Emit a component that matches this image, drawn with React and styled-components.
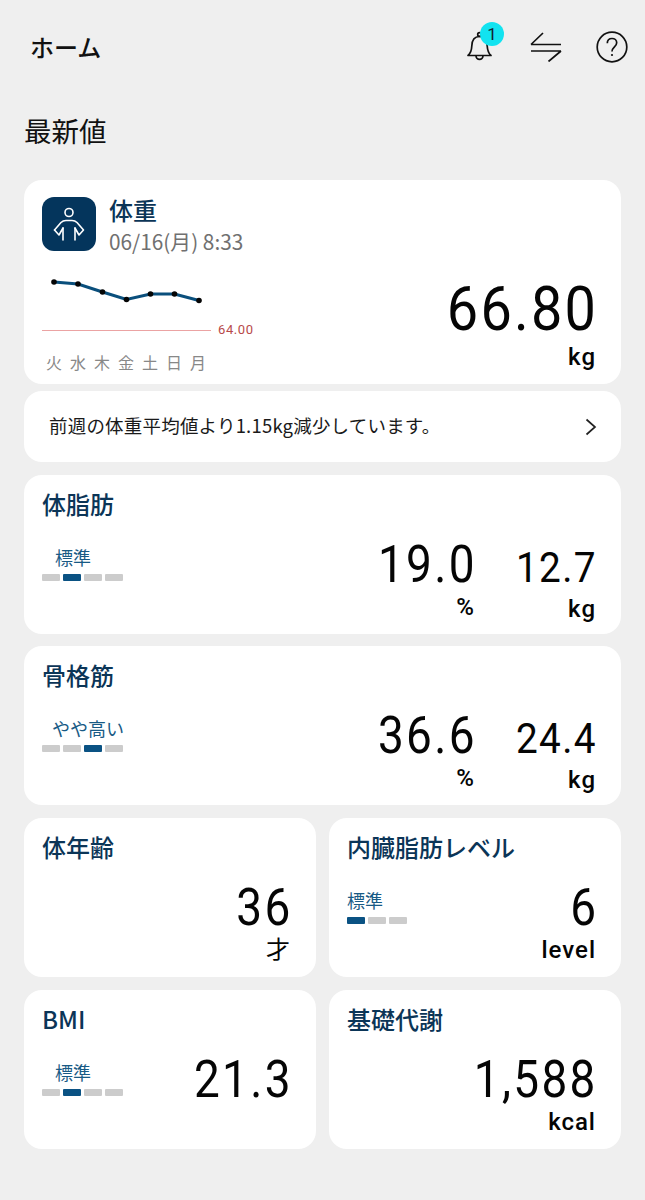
import React from "react";
import styled, { createGlobalStyle } from "styled-components";

const GlobalStyle = createGlobalStyle`
  html, body {
    margin: 0;
    padding: 0;
    background: #efefef;
  }
  body {
    font-family: "Noto Sans CJK JP", "Noto Sans", sans-serif;
  }
`;

const BellIcon = () => (
  <svg width="28" height="34" viewBox="0 0 28 34" fill="none" stroke="#111" strokeWidth="1.7" strokeLinejoin="round">
    <path d="M2 25.5h23c-2.5-2-3.5-5-3.800-9.500-.3-6-2.500-9.500-7.700-9.500S6 10 5.800 16c-.2 4.500-1.300 7.500-3.800 9.500z" />
    <path d="M10 25.800a3.500 3.500 0 0 0 7 0" />
    <circle cx="13.500" cy="4.500" r="1.800" />
  </svg>
);

const SwitchIcon = () => (
  <svg width="32" height="30" viewBox="0 0 32 30" fill="none" stroke="#111" strokeWidth="1.7">
    <path d="M1 12.500h30M1 12.500L13 1" />
    <path d="M1 19h30M31 19L18.500 29.500" />
  </svg>
);

const HelpIcon = () => (
  <svg width="32" height="32" viewBox="0 0 32 32" fill="none" stroke="#111" strokeWidth="1.7">
    <circle cx="16" cy="16" r="14.800" />
    <path d="M11.300 12.300c0-2.900 2-4.800 4.700-4.800s4.700 1.800 4.700 4.300c0 3.900-4.700 4.300-4.700 8.700" />
    <circle cx="16" cy="24" r="1.100" fill="#111" stroke="none" />
  </svg>
);

const BodyIcon = () => (
  <svg width="54" height="54" viewBox="0 0 54 54" fill="none" stroke="#fff" strokeWidth="1.6" strokeLinecap="round" strokeLinejoin="round">
    <circle cx="27" cy="15.500" r="4" />
    <path d="M12.500 33L19 25.500Q21 23.500 24 23.500h6Q33 23.500 35 25.500L41.500 33L37 38L33 31" />
    <path d="M12.500 33L17 38L21 31" />
    <path d="M21 31v12M33 31v12" />
  </svg>
);

const points = [
  [54, 282],
  [78, 284],
  [102.5, 292],
  [126.5, 299.5],
  [150.5, 294],
  [174.5, 294],
  [199, 300.5],
];

const TrendChart = () => (
  <svg width="230" height="50" viewBox="42 272 230 50" style={{ display: "block" }}>
    <polyline
      points={points.map((p) => p.join(",")).join(" ")}
      fill="none"
      stroke="#0a4f7c"
      strokeWidth="3"
    />
    {points.map((p, i) => (
      <circle key={i} cx={p[0]} cy={p[1]} r="2.8" fill="#050505" />
    ))}
  </svg>
);

const Level = ({ label, active, count = 4, indent = 0 }) => (
  <LevelBox>
    <LevelLabel $indent={indent}>{label}</LevelLabel>
    <LevelBars>
      {Array.from({ length: count }).map((_, i) => (
        <LevelBar key={i} $active={i === active} />
      ))}
    </LevelBars>
  </LevelBox>
);

const Metric = ({ value, unit, small, thinUnit }) => (
  <MetricBox $small={small}>
    <MetricValue $small={small}>{value}</MetricValue>
    {unit && <MetricUnit $thin={thinUnit}>{unit}</MetricUnit>}
  </MetricBox>
);

const App = () => {
  return (
    <Page>
      <GlobalStyle />
      <Header>
        <HeaderTitle>ホーム</HeaderTitle>
        <HeaderIcons>
          <BellWrap>
            <BellIcon />
            <Badge>1</Badge>
          </BellWrap>
          <SwitchIcon />
          <HelpIcon />
        </HeaderIcons>
      </Header>
      <SectionTitle>最新値</SectionTitle>

      <WeightCard>
        <WeightLeft>
          <WeightHead>
            <IconTile>
              <BodyIcon />
            </IconTile>
            <div>
              <WeightTitle>体重</WeightTitle>
              <WeightDate>06/16(月) 8:33</WeightDate>
            </div>
          </WeightHead>
          <TrendChart />
          <GoalRow>
            <GoalLine />
            <GoalValue>64.00</GoalValue>
          </GoalRow>
          <Days>
            {["火", "水", "木", "金", "土", "日", "月"].map((d) => (
              <Day key={d}>{d}</Day>
            ))}
          </Days>
        </WeightLeft>
        <WeightValue>
          <BigValue>66.80</BigValue>
          <MetricUnit>kg</MetricUnit>
        </WeightValue>
      </WeightCard>

      <NoticeCard>
        <NoticeText>前週の体重平均値より1.15kg減少しています。</NoticeText>
        <svg width="12" height="18" viewBox="0 0 12 18" fill="none" stroke="#222" strokeWidth="1.7">
          <path d="M1.500 1.500L10 9l-8.500 7.500" />
        </svg>
      </NoticeCard>

      <Stack>
        <Card>
          <CardTitle>体脂肪</CardTitle>
          <CardBody>
            <Level label="標準" active={1} indent={13} />
            <Metrics>
              <Metric value="19.0" unit="%" />
              <Metric value="12.7" unit="kg" small />
            </Metrics>
          </CardBody>
        </Card>
        <Card>
          <CardTitle>骨格筋</CardTitle>
          <CardBody>
            <Level label="やや高い" active={2} indent={10} />
            <Metrics>
              <Metric value="36.6" unit="%" />
              <Metric value="24.4" unit="kg" small />
            </Metrics>
          </CardBody>
        </Card>
        <HalfGrid>
          <Card>
            <CardTitle>体年齢</CardTitle>
            <CardBody>
              <span />
              <Metric value="36" unit="才" thinUnit />
            </CardBody>
          </Card>
          <Card>
            <CardTitle>内臓脂肪レベル</CardTitle>
            <CardBody>
              <Level label="標準" active={0} count={3} />
              <Metric value="6" unit="level" />
            </CardBody>
          </Card>
          <Card>
            <CardTitle>BMI</CardTitle>
            <CardBody>
              <Level label="標準" active={1} indent={13} />
              <Metric value="21.3" />
            </CardBody>
          </Card>
          <Card>
            <CardTitle>基礎代謝</CardTitle>
            <CardBody>
              <span />
              <Metric value="1,588" unit="kcal" />
            </CardBody>
          </Card>
        </HalfGrid>
      </Stack>
    </Page>
  );
};

export default App;

const Page = styled.div`
  width: 645px;
  height: 1200px;
  box-sizing: border-box;
  padding: 0 24px;
  background: #efefef;
  overflow: hidden;
`;

const Header = styled.header`
  height: 94px;
  display: flex;
  align-items: center;
  justify-content: space-between;
`;

const HeaderTitle = styled.h1`
  margin: 0 0 0 6px;
  font-size: 24px;
  font-weight: 500;
  line-height: 1;
  color: #111;
`;

const HeaderIcons = styled.div`
  display: flex;
  align-items: center;
  gap: 34px;
  margin-right: -7px;
`;

const BellWrap = styled.div`
  position: relative;
  display: flex;
  margin-right: 2px;
`;

const Badge = styled.span`
  position: absolute;
  top: -8px;
  left: 14px;
  width: 24px;
  height: 24px;
  border-radius: 50%;
  background: #12e3f0;
  color: #123;
  font: 400 17px/24px Roboto, sans-serif;
  text-align: center;
`;

const SectionTitle = styled.h2`
  margin: 16px 0 30px;
  font-size: 27.5px;
  font-weight: 400;
  line-height: 40px;
  color: #111;
`;

const Surface = styled.div`
  background: #fff;
  border-radius: 18px;
  box-sizing: border-box;
`;

const WeightCard = styled(Surface)`
  height: 204px;
  padding: 17px 25px 0 18px;
  display: flex;
  justify-content: space-between;
`;

const WeightLeft = styled.div`
  display: flex;
  flex-direction: column;
`;

const WeightHead = styled.div`
  display: flex;
  gap: 13px;
  height: 54px;
  margin-bottom: 21px;
`;

const IconTile = styled.div`
  width: 54px;
  height: 54px;
  border-radius: 12px;
  background: #04355c;
  display: flex;
  align-items: center;
  justify-content: center;
`;

const WeightTitle = styled.div`
  font-size: 24px;
  font-weight: 500;
  line-height: 30px;
  margin-top: -2px;
  color: #0b3557;
`;

const WeightDate = styled.div`
  font-size: 20.8px;
  line-height: 30px;
  margin-top: 1px;
  color: #707070;
`;

const GoalRow = styled.div`
  display: flex;
  align-items: center;
  gap: 7px;
  height: 16px;
`;

const GoalLine = styled.div`
  width: 169px;
  height: 1px;
  background: #eba3a3;
`;

const GoalValue = styled.span`
  font: 400 13px/16px Roboto, sans-serif;
  letter-spacing: 0.6px;
  color: #b84a4a;
`;

const Days = styled.div`
  display: flex;
  margin-top: 13px;
  padding-left: 4px;
`;

const Day = styled.span`
  width: 24px;
  font-size: 16px;
  line-height: 22px;
  color: #888;
`;

const WeightValue = styled.div`
  align-self: flex-end;
  margin-bottom: 12px;
  display: flex;
  flex-direction: column;
  align-items: flex-end;
`;

const BigValue = styled.div`
  font: 400 62px/62px Roboto, sans-serif;
  letter-spacing: 2.5px;
  margin-right: -2px;
  transform: scaleX(0.9);
  transform-origin: right center;
  color: #050505;
`;

const NoticeCard = styled(Surface)`
  height: 71px;
  margin-top: 7px;
  padding: 0 24px 0 25px;
  display: flex;
  align-items: center;
  justify-content: space-between;
`;

const NoticeText = styled.span`
  margin-top: -3px;
  font-size: 18.5px;
  letter-spacing: 0.2px;
  color: #1a1a1a;
`;

const Stack = styled.div`
  margin-top: 13px;
  display: flex;
  flex-direction: column;
  gap: 12px;
`;

const HalfGrid = styled.div`
  display: grid;
  grid-template-columns: 292px 292px;
  justify-content: space-between;
  row-gap: 13px;
  margin-top: 1px;
`;

const Card = styled(Surface)`
  height: 159px;
  padding: 12px 25px 0 18px;
  display: flex;
  flex-direction: column;
`;

const CardTitle = styled.div`
  font-size: 24px;
  font-weight: 500;
  line-height: 34px;
  color: #0b3557;
`;

const CardBody = styled.div`
  display: flex;
  justify-content: space-between;
  align-items: flex-start;
  margin-top: 19px;
`;

const LevelBox = styled.div`
  margin-top: 5px;
`;

const LevelLabel = styled.div`
  padding-left: ${(p) => p.$indent}px;
  font-size: 18px;
  line-height: 24px;
  color: #185a85;
  white-space: nowrap;
`;

const LevelBars = styled.div`
  display: flex;
  gap: 3px;
  margin-top: 5px;
`;

const LevelBar = styled.i`
  width: 18px;
  height: 7px;
  border-radius: 1px;
  background: ${(p) => (p.$active ? "#0a5283" : "#cccccc")};
`;

const Metrics = styled.div`
  display: flex;
  align-items: baseline;
`;

const MetricBox = styled.div`
  width: ${(p) => (p.$small ? "121px" : "auto")};
  display: flex;
  flex-direction: column;
  align-items: flex-end;
`;

const MetricValue = styled.div`
  font: 400 ${(p) => (p.$small ? "43px" : "51px")}/50px Roboto, sans-serif;
  letter-spacing: ${(p) => (p.$small ? "1.5px" : "2.6px")};
  margin-right: ${(p) => (p.$small ? "-1px" : "-2px")};
  transform: scaleX(0.9);
  transform-origin: right center;
  color: #050505;
`;

const MetricUnit = styled.div`
  margin-top: 2px;
  font: ${(p) => (p.$thin ? 400 : 500)} 24px/30px Roboto, "Noto Sans CJK JP", sans-serif;
  letter-spacing: 1px;
  color: #050505;
`;
